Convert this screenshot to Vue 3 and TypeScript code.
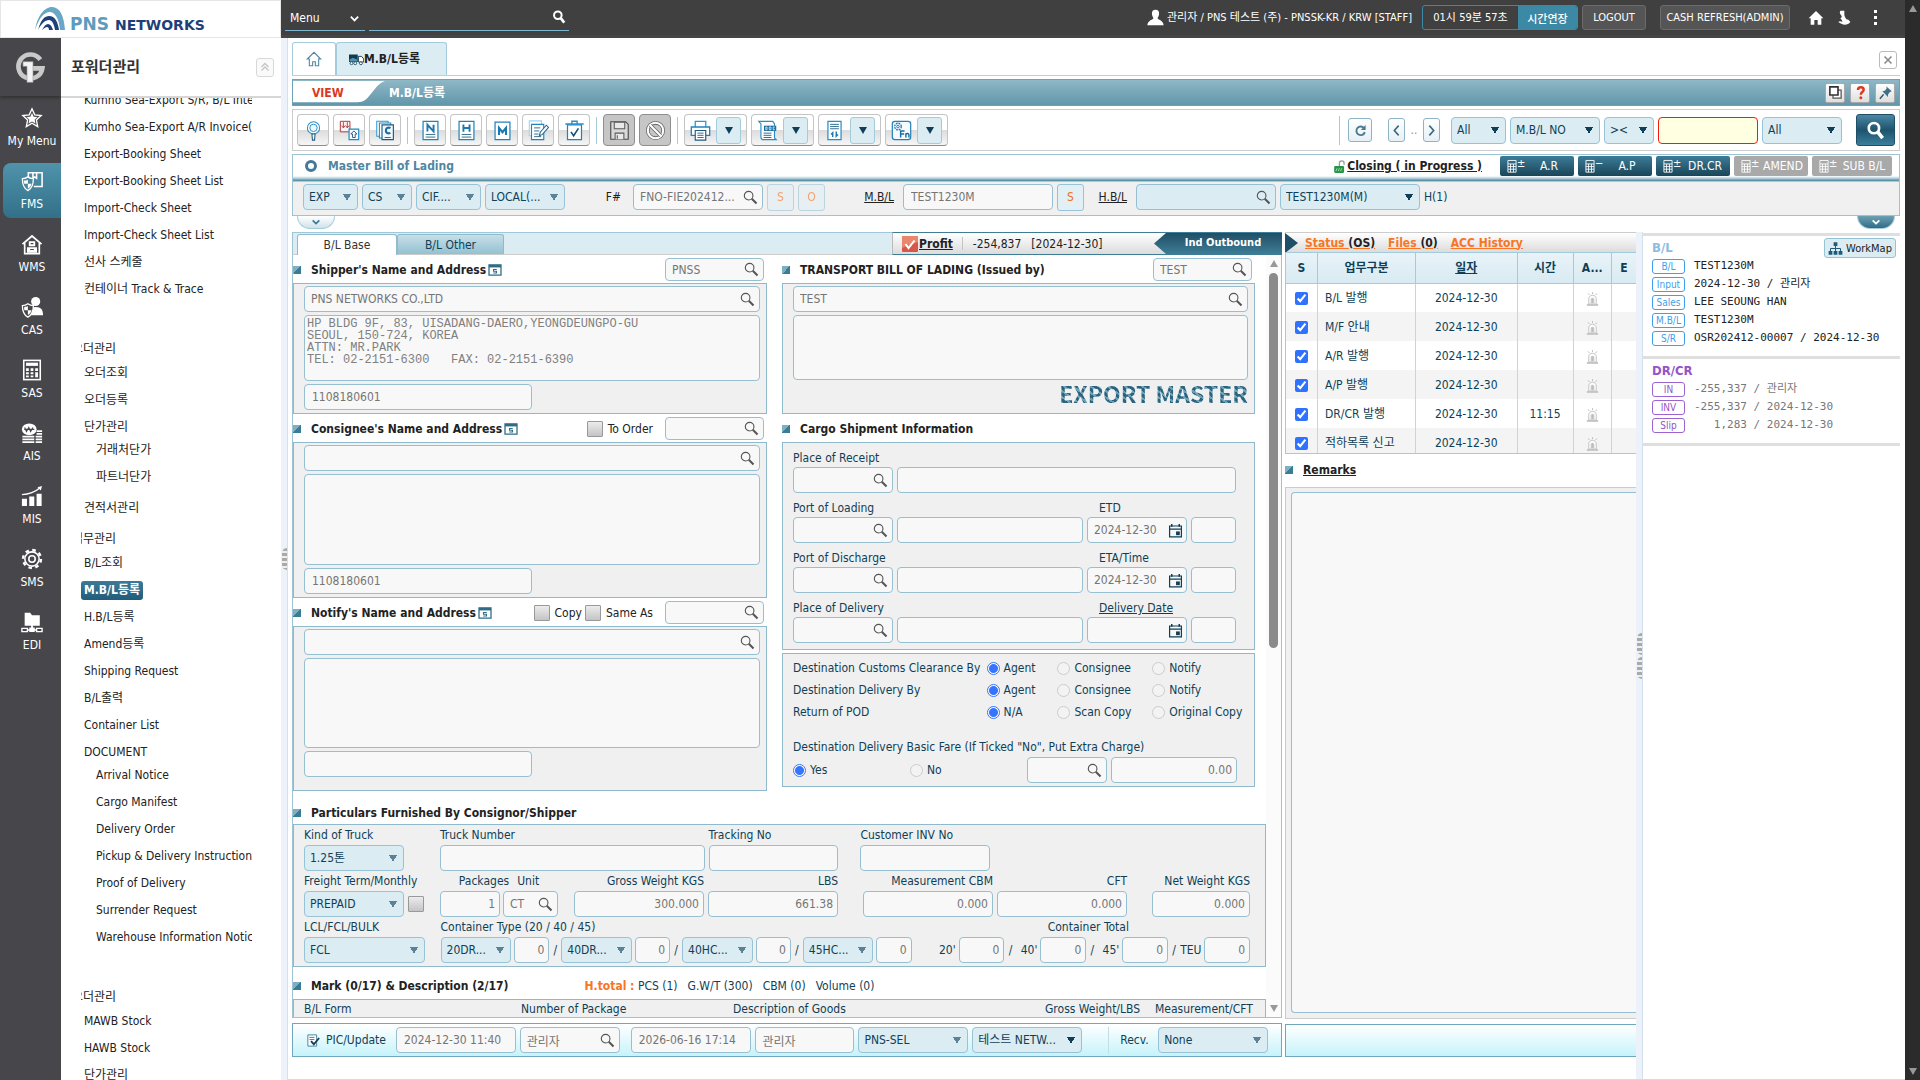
<script setup lang="ts">
import { ref } from 'vue'

const icons: Record<string, string> = {
  lens: '<circle cx="6" cy="6" r="4.6" fill="none" stroke="#555" stroke-width="1.2"/><path d="M9.4 9.4l5 5" stroke="#555" stroke-width="2.2"/>',
  cal: '<path d="M1.7 3.2h12.6v11.6H1.7z M1.7 6.6h12.6" fill="none" stroke="#0f3f56" stroke-width="1.3"/><path d="M4 1v3M12 1v3" stroke="#0f3f56" stroke-width="1.6"/><rect x="8.6" y="9" width="4" height="4" fill="#0f3f56"/>',
  star: '<path d="M12 2l3 6.600 7 .8-5.200 4.800 1.400 7.100-6.200-3.600-6.200 3.600 1.400-7.100L2 9.400l7-.8z" fill="none" stroke="#fff" stroke-width="1.500"/><path d="M12 6.500l1.800 4 4.200.4-3.100 2.900.9 4.200-3.800-2.100L8.200 18l.9-4.200L6 10.900l4.200-.4z" fill="#fff"/>',
  fms: '<path d="M8 8V3h15v15H14M13 3v6l2-1.500L17 9V3" fill="none" stroke="#fff" stroke-width="1.700"/><path d="M7.500 7.500C5.500 9 3.500 9.500 1.500 9.500c0 6.500 1.500 10.500 6 13 4.500-2.500 6-6.500 6-13-2 0-4-.5-6-2z" fill="#47889f" stroke="#fff" stroke-width="1.400"/><path d="M7.500 10.500v4.500h-4c-.3-1-.4-2-.4-3.500 1.500 0 3-.3 4.400-1zM7.500 15h4c-.5 2.500-2 4.300-4 5.500z" fill="#fff"/>',
  wms: '<path d="M1 11.500L12 2l11 9.500-1.300 1.300L12 4.600 2.300 12.800z" fill="#fff"/><path d="M4 11v11.500h16V11" fill="none" stroke="#fff" stroke-width="1.800"/><path d="M8.500 9h7v5.500h-7zM6.500 15.500h11v6h-11z" fill="#fff"/><path d="M10.500 11.500h3M10 18h4" stroke="#47464b" stroke-width="1.300"/>',
  cas: '<circle cx="16" cy="6" r="5" fill="#fff"/><path d="M9 21c0-6 1-9 7-9s8 3 8 9z" fill="#fff"/><path d="M7.500 8.500c-2 1.500-4 2-6 2 0 6.500 1.500 10 6 12.500 4.500-2.500 6-6 6-12.500-2 0-4-.5-6-2z" fill="#47464b" stroke="#fff" stroke-width="1.400"/><path d="M7.500 11v4.500h-4v-3.500c1.500 0 3-.3 4-1zM7.500 15.500h4c-.5 2.500-2 4-4 5.200z" fill="#fff"/>',
  sas: '<rect x="3" y="1.500" width="18" height="21" fill="none" stroke="#fff" stroke-width="1.700"/><rect x="5.500" y="4" width="13" height="3.500" fill="#fff"/><path d="M5.500 10h3v3h-3zM10.500 10h3v3h-3zM15.500 10h3v3h-3zM5.500 14.500h3v2h-3zM10.500 14.500h3v2h-3zM15.500 14.500h3v5.500h-3zM5.500 18h3v2h-3zM10.500 18h3v2h-3z" fill="#fff"/>',
  ais: '<ellipse cx="9" cy="8" rx="8" ry="6.500" fill="#fff"/><path d="M4 6l2 4.500L8.500 6l2 4.500L13 6M3.500 8h11" fill="none" stroke="#47464b" stroke-width="1.200"/><path d="M1.500 16h13M1.500 19h13M1.500 22h13M17 10h6M17 13h6M16 16h7M16 19h7M16 22h7" stroke="#fff" stroke-width="2"/>',
  mis: '<path d="M1 15h5.500v8H1zM9 12.500h5.500V23H9zM17 9.500h5.500V23H17z" fill="#fff"/><path d="M1 10.500C9 10 15 8 20 3.500" fill="none" stroke="#fff" stroke-width="1.400"/><path d="M23 1l-1.500 5-3.500-3.600z" fill="#fff"/>',
  sms: '<circle cx="12" cy="12" r="7.800" fill="none" stroke="#fff" stroke-width="1.700"/><circle cx="12" cy="12" r="9.800" fill="none" stroke="#fff" stroke-width="2.600" stroke-dasharray="3.850 3.850"/><circle cx="12" cy="12" r="3.500" fill="none" stroke="#fff" stroke-width="1.700"/>',
  edi: '<path d="M4 2h6l2 2.500h8.500V16H4z" fill="#fff"/><path d="M1 19h6v3.500H1zM17 19h6v3.500h-6z" fill="none" stroke="#fff" stroke-width="1.500"/><path d="M9 18h6v5H9zM11 15h2v4h-2zM7 20h10v1.500H7z" fill="#fff"/>',
  view: '<circle cx="12" cy="9" r="7" fill="#fff" stroke="#2f8fc4" stroke-width="1.200"/><circle cx="12" cy="9" r="4.200" fill="#eef8fd" stroke="#2f8fc4" stroke-width="1.100"/><path d="M10.200 16h3.600l-.6 7h-2.400z" fill="#fff" stroke="#1c5b80" stroke-width="1.200"/>',
  swap: '<path d="M1.500 1.500h11v12h-11z" fill="#fbf3f3" stroke="#a33" stroke-width="1.100"/><path d="M5 2.500v6M3 6.500l2 2.500L7 6.500M9.500 2.500v6M7.500 6.500l2 2.500 2-2.500" fill="none" stroke="#a33"/><path d="M11.500 10.500h11v12h-11z" fill="#f4faff" stroke="#1c8bc8" stroke-width="1.300"/><path d="M15.500 20v-4h-2l3.500-3.500L20.500 16h-2v4z" fill="#fff" stroke="#1c4e70"/>',
  copy: '<path d="M2 1.500h13v17H2z" fill="#fff" stroke="#2f9ad0" stroke-width="1.200"/><path d="M5 3.500h13v17H5z" fill="#fff" stroke="#2a86b8" stroke-width="1.200"/><path d="M8 5.500h13v17H8z" fill="#f1f9ff" stroke="#1c5b80" stroke-width="1.300"/><path d="M17.500 9.500c-1-1.200-5-1.500-5 2.500s4 3.700 5 2.500" fill="none" stroke="#1a6fa3" stroke-width="2.400"/><path d="M11 20h7" stroke="#1c5b80"/>',
  pageN: '<path d="M3.500 1.500h17v21h-17z" fill="#fff" stroke="#2382bb" stroke-width="1.400"/><path d="M8.500 13V5.500L15.500 13V5.500" fill="none" stroke="#1a77b0" stroke-width="2.200"/><path d="M6.500 16.500h11M6.500 19.500h11" stroke="#1c5b80"/>',
  pageH: '<path d="M3.500 1.500h17v21h-17z" fill="#fff" stroke="#2382bb" stroke-width="1.400"/><path d="M8.500 5v8.500M15.500 5v8.500M8.500 9.200h7" fill="none" stroke="#1a77b0" stroke-width="2.200"/><path d="M6.500 16.500h11M6.500 19.500h11" stroke="#1c5b80"/>',
  pageM: '<path d="M3.500 2.500h17v20h-17z" fill="#fff" stroke="#2382bb" stroke-width="1.400"/><path d="M8 17V9l4 5 4-5v8" fill="none" stroke="#1a77b0" stroke-width="2.400"/>',
  edit: '<path d="M1.500 1h14v17h-14z" fill="#fff" stroke="#9cd3ef" stroke-width="1.200"/><path d="M4 5h14v17.500H4z" fill="#fff" stroke="#2382bb" stroke-width="1.300"/><path d="M7 9h7M7 12.500h6M7 16h5M7 19h8" stroke="#1c5b80"/><path d="M13 18l1-4 7-8 2.500 2.500-7 8z" fill="#fff" stroke="#1c6b9a" stroke-width="1.200"/>',
  trash: '<path d="M4 5.500h16v17H4z" fill="#fff" stroke="#2382bb" stroke-width="1.400"/><path d="M1.500 4.500h21M9 4V1.500h6V4" fill="none" stroke="#2a8fc8" stroke-width="1.600"/><path d="M8 13.500l3 4.500 5.500-8.500" fill="none" stroke="#15507a" stroke-width="1.800"/>',
  save: '<path d="M2 2h17l3 3v17H2z" fill="#d9d9d9" stroke="#4c4c4c" stroke-width="1.300"/><path d="M6 2.500h12V10H6zM7 22v-7h10v7M9.500 17.500v4" fill="#e9e9e9" stroke="#5a5a5a" stroke-width="1.200"/>',
  ban: '<circle cx="12" cy="12" r="8.800" fill="none" stroke="#666" stroke-width="4.200"/><circle cx="12" cy="12" r="8.800" fill="none" stroke="#fff" stroke-width="2.400"/><path d="M6 6l12 12" stroke="#666" stroke-width="4.200"/><path d="M5.500 5.500l13 13" stroke="#fff" stroke-width="2.400"/>',
  print: '<path d="M6 8V1.500h12V8" fill="#fff" stroke="#2a9bd6" stroke-width="1.500"/><path d="M1.500 8h21v9.500h-21z" fill="#fff" stroke="#2382bb" stroke-width="1.500"/><path d="M6 12h12v11H6z" fill="#fff" stroke="#1c5b80" stroke-width="1.300"/><path d="M8.500 15h7M8.500 17.500h7M8.500 20h7" stroke="#1c5b80"/>',
  doc: '<path d="M2 1.500h16l2 3v16l2 2H6l-1.500-2v-16z" fill="#fff" stroke="#2390cb" stroke-width="1.300"/><rect x="8" y="6.500" width="14" height="6" fill="#1c6ea0"/><path d="M10 8v3h1.500V8zM14 8h2v3h-2zM20.500 8h-2v3h2" fill="none" stroke="#fff" stroke-width=".8"/><path d="M7.500 15h9M7.500 17.500h9M7.500 20h9" stroke="#1c5b80"/>',
  sync: '<path d="M4.500 1.500h15v21h-15z" fill="#fff" stroke="#2390cb" stroke-width="1.400"/><path d="M7 5h10M7 7.500h10M7 10h10" stroke="#1c5b80"/><path d="M10 19.500v-5l-2 2M14 13v5.500l2-2" fill="none" stroke="#1c77b0" stroke-width="1.600"/>',
  fn: '<rect x="1.500" y="1.500" width="21" height="21" rx="3" fill="#f4faff" stroke="#2382bb" stroke-width="1.400"/><circle cx="8" cy="7.500" r="3.800" fill="none" stroke="#1c77b0" stroke-width="1.500" stroke-dasharray="2 1"/><circle cx="8" cy="7.500" r="1.500" fill="none" stroke="#1c77b0"/><path d="M11 20v-7.500h4.500M11 16h4M17 20v-5M17 17c0-2 3.500-2 3.500 0v3" fill="none" stroke="#1c6b9a" stroke-width="1.600"/>',
  home: '<path d="M2 12L12 2l10 10h-3v10h-5v-6h-4v6H5V12z" fill="#fff" stroke="#4d87a3" stroke-width="1.600"/>',
  homeW: '<path d="M1 12.500L12 1.500l11 11h-3V22h-5.500v-7h-5v7H4v-9.500z" fill="#fff"/>',
  truck: '<path d="M0 4h14v12H0z" fill="#123a4e"/><path d="M15 7h5l3.500 4v5H15z" fill="#fff" stroke="#123a4e" stroke-width="1.500"/><circle cx="4" cy="18" r="2.300" fill="#fff" stroke="#123a4e" stroke-width="1.300"/><circle cx="10" cy="18" r="2.300" fill="#fff" stroke="#123a4e" stroke-width="1.300"/><circle cx="19" cy="18" r="2.300" fill="#fff" stroke="#123a4e" stroke-width="1.300"/><path d="M1 12l5-3 7 3v3H1z" fill="#4d94b2"/>',
  memo: '<path d="M1 1h14v12H1z" fill="#fff" stroke="#2f6d87" stroke-width="1.500"/><path d="M1 1h14v3H1z" fill="#2f6d87"/><path d="M10 6.500H6.200v2h3.600v2H6" fill="none" stroke="#2f6d87" stroke-width="1.200"/>',
  user: '<path d="M12 1c4 0 5.500 3 5 6.500-.3 2.500-1.500 4-2 5.500 0 2 8 2.500 8.500 10H.5C1 15.500 9 15 9 13c-.5-1.500-1.700-3-2-5.500C6.500 4 8 1 12 1z" fill="#fff"/>',
  quick: '<path d="M5 1h6v6c0 3 2 4 3 7 2 0 4 1 6 4-2 3-5 4-8 4-4 0-7-2-10-4 2-2 4-1 6 0 0-3-2-4-3-6 2 0 2-1 2-3C5 6 3 4 5 1z" fill="#fff"/>',
  calc: '<path d="M1.500 2.500h14v20h-14zM1.500 8.500h14M6 8.500v14M11 8.500v14M1.500 13h14M1.500 17.500h14" fill="none" stroke="#fff" stroke-width="1.500"/>',
  lock: '<path d="M11 11V6c0-5 8-5 8 0v3" fill="none" stroke="#999" stroke-width="2.200"/><rect x="2" y="11" width="17" height="12" rx="2" fill="#259445"/><path d="M5 20l2-5M9 20l2-5M13 20l2-5" stroke="#bfe8c8" stroke-width="1.400"/>',
  bell: '<path d="M6 20v-8c0-8 12-8 12 0v8z" fill="#fff" stroke="#c4c4c4" stroke-width="1.600"/><path d="M9 19v-6c0-4 6-4 6 0v6z" fill="#c9c9c9"/><path d="M3 20h18v3H3z" fill="#c4c4c4"/><path d="M12 1v3M5 3l2 2.500M19 3l-2 2.500M12 12v6" stroke="#bbb" stroke-width="1.500"/>',
  map: '<path d="M9 2h6v6H9zM1 16h6v6H1zM9 16h6v6H9zM17 16h6v6h-6z" fill="#1f5a77"/><path d="M12 8v8M4 16v-4h16v4" fill="none" stroke="#1f5a77" stroke-width="1.600"/>',
  check: '<rect x="0" y="0" width="16" height="16" rx="1" fill="#d9574a"/><path d="M0 0h16v6L0 12z" fill="#e8876e"/><path d="M3.500 8l3 4L12.500 4.500" fill="none" stroke="#fff" stroke-width="2"/>',
  pic: '<path d="M3 3h14v18H3z" fill="#fff" stroke="#4f87a3" stroke-width="1.600"/><path d="M5.500 7h8M5.500 10.500h8" stroke="#2f6d87" stroke-width="1.400"/><path d="M8 13l4.500 5L21 8" fill="none" stroke="#15425a" stroke-width="3"/>',
  up2: '<path d="M5 12l7-7 7 7M5 19l7-7 7 7" fill="none" stroke="#c4c4c4" stroke-width="2.500"/>',
  down: '<path d="M4 8l8 8 8-8" fill="none" stroke="currentColor" stroke-width="4"/>',
  left: '<path d="M16 3l-8 9 8 9" fill="none" stroke="#3a6a83" stroke-width="3"/>',
  right: '<path d="M8 3l8 9-8 9" fill="none" stroke="#3a6a83" stroke-width="3"/>',
  reload: '<path d="M19 8a8 8 0 1 0 1 7" fill="none" stroke="#4d7a92" stroke-width="3.600"/><path d="M21.500 2v9h-9z" fill="#4d7a92"/>',
  searchW: '<circle cx="10" cy="9" r="6.500" fill="none" stroke="#fff" stroke-width="3.400"/><path d="M15 14l6 7.500" stroke="#fff" stroke-width="4.600"/>',
  close: '<path d="M5 5l14 14M19 5L5 19" stroke="#8a8a8a" stroke-width="3.200"/>',
  win: '<path d="M8 8h13v13H8z" fill="#fff" stroke="#555" stroke-width="2"/><path d="M3 3h13v13H3z" fill="#fff" stroke="#333" stroke-width="2.600"/>',
  help: '<path d="M8 8c0-6 9-5.500 9-.5 0 4-4.500 3.500-4.500 8" fill="none" stroke="#d9391f" stroke-width="4"/><circle cx="12.500" cy="20.500" r="2.400" fill="#d9391f"/>',
  pin: '<path d="M13 2l9 8-3 1-3 4v4L7 10l4-1 3-4z" fill="#3e7188"/><path d="M9 15l-6 7" stroke="#24556c" stroke-width="2.400"/>',
  g: '<path d="M38 13A18 18 0 1 0 41 26H27" fill="none" stroke="#c9c9c9" stroke-width="7"/><path d="M12 16h15v31h-9V23h-6z" fill="#f2f2f2" stroke="#9a9a9a"/>',
}

const rail = [
  { icon: 'star', label: 'My Menu' }, { icon: 'fms', label: 'FMS', on: true }, { icon: 'wms', label: 'WMS' },
  { icon: 'cas', label: 'CAS' }, { icon: 'sas', label: 'SAS' }, { icon: 'ais', label: 'AIS' },
  { icon: 'mis', label: 'MIS' }, { icon: 'sms', label: 'SMS' }, { icon: 'edi', label: 'EDI' },
]

interface Group { head?: string; far?: boolean; items: { t: string; on?: boolean; subs?: string[] }[] }
const menu: Group[] = [
  { items: [{ t: 'Kumho Sea-Export S/R, B/L Inte' }, { t: 'Kumho Sea-Export A/R Invoice(' }, { t: 'Export-Booking Sheet' }, { t: 'Export-Booking Sheet List' }, { t: 'Import-Check Sheet' }, { t: 'Import-Check Sheet List' }, { t: '선사 스케줄' }, { t: '컨테이너 Track & Trace' }] },
  { head: '오더관리', far: true, items: [{ t: '오더조회' }, { t: '오더등록' }, { t: '단가관리', subs: ['거래처단가', '파트너단가'] }, { t: '견적서관리' }] },
  { head: '업무관리', items: [{ t: 'B/L조회' }, { t: 'M.B/L등록', on: true }, { t: 'H.B/L등록' }, { t: 'Amend등록' }, { t: 'Shipping Request' }, { t: 'B/L출력' }, { t: 'Container List' }, { t: 'DOCUMENT', subs: ['Arrival Notice', 'Cargo Manifest', 'Delivery Order', 'Pickup & Delivery Instruction', 'Proof of Delivery', 'Surrender Request', 'Warehouse Information Notic'] }] },
  { head: '오더관리', far: true, items: [{ t: 'MAWB Stock' }, { t: 'HAWB Stock' }, { t: '단가관리' }] },
]

const tools = [['view', 'swap', 'copy'], ['pageN', 'pageH', 'pageM', 'edit', 'trash'], ['save', 'ban']]
const dropTools = ['print', 'doc', 'sync', 'fn']
const actions = [
  { t: 'A.R', s: '±' }, { t: 'A.P', s: '−' }, { t: 'DR.CR', s: '±' },
  { t: 'AMEND', s: '±', off: true }, { t: 'SUB B/L', s: '±', off: true, wide: true },
]

const addresses = [
  { id: 'shipper', title: "Shipper's Name and Address", code: 'PNSS', name: 'PNS NETWORKS CO.,LTD', body: 'HP BLDG 9F, 83, UISADANG-DAERO,YEONGDEUNGPO-GU\nSEOUL, 150-724, KOREA\nATTN: MR.PARK\nTEL: 02-2151-6300   FAX: 02-2151-6390', no: '1108180601', checks: [] as string[] },
  { id: 'consignee', title: "Consignee's Name and Address", code: '', name: '', body: '', no: '1108180601', checks: ['To Order'] },
  { id: 'notify', title: "Notify's Name and Address", code: '', name: '', body: '', no: '', checks: ['Copy', 'Same As'] },
]

const ports = [
  { label: 'Port of Loading', dateLabel: 'ETD', date: '2024-12-30' },
  { label: 'Port of Discharge', dateLabel: 'ETA/Time', date: '2024-12-30' },
  { label: 'Place of Delivery', dateLabel: 'Delivery Date', date: '', link: true },
]
const choices = [
  { label: 'Destination Customs Clearance By', opts: ['Agent', 'Consignee', 'Notify'] },
  { label: 'Destination Delivery By', opts: ['Agent', 'Consignee', 'Notify'] },
  { label: 'Return of POD', opts: ['N/A', 'Scan Copy', 'Original Copy'] },
]
const containers = ['20DR...', '40DR...', '40HC...', '45HC...']
const totals = ["20'", "40'", "45'", 'TEU']

const status = [
  { n: 'B/L 발행', d: '2024-12-30', t: '' }, { n: 'M/F 안내', d: '2024-12-30', t: '' },
  { n: 'A/R 발행', d: '2024-12-30', t: '' }, { n: 'A/P 발행', d: '2024-12-30', t: '' },
  { n: 'DR/CR 발행', d: '2024-12-30', t: '11:15' }, { n: '적하목록 신고', d: '2024-12-30', t: '' },
]
const blInfo = [['B/L', 'TEST1230M'], ['Input', '2024-12-30 / 관리자'], ['Sales', 'LEE SEOUNG HAN'], ['M.B/L', 'TEST1230M'], ['S/R', 'OSR202412-00007 / 2024-12-30']]
const drInfo = [['IN', '-255,337 / 관리자'], ['INV', '-255,337 / 2024-12-30'], ['Slip', '   1,283 / 2024-12-30']]

const search = ref('')
const keyword = ref('')
</script>

<template>
  <div class="app">
    <div class="shell">
      <header class="top">
        <a class="brand" href="#" aria-label="PNS Networks">
          <svg viewBox="0 0 30 24" class="arc"><path d="M0 23C3 6 11 0 17 0c8 0 12 9 13 23h-5C24 10 19 5 15 5 9 5 4 11 0 23z" fill="#6aa6c6" /><path d="M3 23C6 12 10 9 14 9c6 0 9 6 10 14h-4c-1-6-3-10-6-10-4 0-8 4-11 10z" fill="#1d4079" /><path d="M7 23c2-4 4-6 6-6s4 2 5 6h-4c0-2-1-3-2-3s-3 1-5 3z" fill="#1d4079" /></svg>
          <span class="pns">PNS</span><span class="net">NETWORKS</span>
        </a>
        <button class="menu-btn">Menu <svg viewBox="0 0 24 24" v-html="icons.down" /></button>
        <label class="finder"><input v-model="search" aria-label="Search menu"><svg viewBox="0 0 24 24" v-html="icons.searchW" /></label>
        <div class="who"><svg viewBox="0 0 24 24" v-html="icons.user" />관리자 / PNS 테스트 (주) - PNSSK-KR / KRW [STAFF]</div>
        <div class="timer"><span>01시 59분 57초</span><button>시간연장</button></div>
        <button class="dark out">LOGOUT</button>
        <button class="dark cash">CASH REFRESH(ADMIN)</button>
        <div class="top-icons">
          <button aria-label="Home"><svg viewBox="0 0 24 24" v-html="icons.homeW" /></button>
          <button aria-label="Quick menu"><svg viewBox="0 0 24 24" v-html="icons.quick" /></button>
          <button aria-label="More" class="dots"><i /><i /><i /></button>
        </div>
      </header>

      <div class="body">
        <nav class="rail">
          <a href="#" class="g" aria-label="G1"><svg viewBox="0 0 48 48" v-html="icons.g" /></a>
          <a v-for="r in rail" :key="r.label" href="#" class="rail-item" :class="{ on: r.on }"><svg viewBox="0 0 24 24" v-html="icons[r.icon]" /><span>{{ r.label }}</span></a>
        </nav>

        <aside class="side">
          <div class="side-head"><h2>포워더관리</h2><button aria-label="Collapse"><svg viewBox="0 0 24 24" v-html="icons.up2" /></button></div>
          <div class="side-list">
            <div v-for="(g, gi) in menu" :key="gi" class="group">
              <h3 v-if="g.head" :class="{ far: g.far }">{{ g.head }}</h3>
              <ul>
                <li v-for="it in g.items" :key="it.t">
                  <a href="#" :class="{ on: it.on }">{{ it.t }}</a>
                  <ul v-if="it.subs" class="subs"><li v-for="s in it.subs" :key="s"><a href="#">{{ s }}</a></li></ul>
                </li>
              </ul>
            </div>
          </div>
        </aside>
        <div class="split"><i class="grip" /></div>

        <main class="main">
          <div class="tabs">
            <a href="#" class="tab-home" aria-label="Home"><svg viewBox="0 0 24 24" v-html="icons.home" /></a>
            <a href="#" class="tab-on"><svg viewBox="0 0 24 24" v-html="icons.truck" />M.B/L등록</a>
            <button class="x" aria-label="Close"><svg viewBox="0 0 24 24" v-html="icons.close" /></button>
          </div>

          <div class="titlebar">
            <svg class="swoosh" viewBox="0 0 92 27" preserveAspectRatio="none"><path d="M0 1h92c-8 3-12 12-18 19-3 3-6 4-10 4H0z" fill="#fff" /></svg>
            <b class="mode">VIEW</b><h1>M.B/L등록</h1>
            <div class="title-icons"><button v-for="n in ['win', 'help', 'pin']" :key="n" :aria-label="n"><svg viewBox="0 0 24 24" v-html="icons[n]" /></button></div>
          </div>

          <div class="toolbar">
            <template v-for="(set, si) in tools" :key="si">
              <div class="set"><button v-for="n in set" :key="n" class="tool" :class="{ off: si === 2 }" :aria-label="n"><svg viewBox="0 0 24 24" v-html="icons[n]" /></button></div>
              <i class="bar" />
            </template>
            <div class="set"><div v-for="n in dropTools" :key="n" class="tool duo"><button :aria-label="n"><svg viewBox="0 0 24 24" v-html="icons[n]" /></button><button class="arrow" :aria-label="n + ' options'"><i /></button></div></div>
            <div class="query">
              <i class="bar" />
              <button class="mini reload" aria-label="Reload"><svg viewBox="0 0 24 24" v-html="icons.reload" /></button>
              <div class="pager"><button class="mini" aria-label="Previous"><svg viewBox="0 0 24 24" v-html="icons.left" /></button><span>..</span><button class="mini" aria-label="Next"><svg viewBox="0 0 24 24" v-html="icons.right" /></button></div>
              <div class="criteria">
                <select class="sel q1" aria-label="Scope"><option>All</option></select>
                <select class="sel q2" aria-label="Field"><option>M.B/L NO</option></select>
                <select class="sel q3" aria-label="Operator"><option>&gt;&lt;</option></select>
                <input v-model="keyword" class="key" aria-label="Keyword">
                <select class="sel q4" aria-label="Team"><option>All</option></select>
              </div>
              <button class="go" aria-label="Search"><svg viewBox="0 0 24 24" v-html="icons.searchW" /></button>
            </div>
          </div>

          <section class="head-box">
            <div class="head-title">
              <i class="ring" /><h2>Master Bill of Lading</h2>
              <a href="#" class="closing"><svg viewBox="0 0 24 24" v-html="icons.lock" /><u>Closing ( in Progress )</u></a>
              <button v-for="a in actions" :key="a.t" class="act" :class="{ off: a.off, wide: a.wide }"><svg viewBox="0 0 17 24" v-html="icons.calc" /><sup>{{ a.s }}</sup><span>{{ a.t }}</span></button>
            </div>
            <div class="keys">
              <select class="sel dim k1" aria-label="Direction"><option>EXP</option></select>
              <select class="sel dim k2" aria-label="Service"><option>CS</option></select>
              <select class="sel dim k3" aria-label="Terms"><option>CIF....</option></select>
              <select class="sel dim k4" aria-label="Route"><option>LOCAL(...</option></select>
              <label class="kl fno" for="fno">F#</label>
              <span class="find k5"><input id="fno" value="FNO-FIE202412..."><svg viewBox="0 0 16 16" v-html="icons.lens" /></span>
              <button class="so faint">S</button><button class="so faint">O</button>
              <label class="kl mbl" for="mbl"><u>M.B/L</u></label>
              <input id="mbl" class="inp k6" value="TEST1230M">
              <button class="so">S</button>
              <label class="kl hbl" for="hbl"><u>H.B/L</u></label>
              <span class="find blue k7"><input id="hbl"><svg viewBox="0 0 16 16" v-html="icons.lens" /></span>
              <select class="sel k7" aria-label="House list"><option>TEST1230M(M)</option></select>
              <span>H(1)</span>
            </div>
          </section>
          <div class="pulls">
            <button class="pull" aria-label="Expand"><svg viewBox="0 0 24 24" v-html="icons.down" /></button>
            <button class="pull solid" aria-label="Expand right"><svg viewBox="0 0 24 24" v-html="icons.down" /></button>
          </div>

          <div class="work">
            <section class="form">
              <div class="form-tabs">
                <button class="ft on">B/L Base</button><button class="ft">B/L Other</button>
                <div class="profit"><svg viewBox="0 0 16 16" v-html="icons.check" /><a href="#">Profit</a><i /><span>-254,837</span><span>[2024-12-30]</span><b>Ind Outbound</b></div>
              </div>
              <div class="pane">
                <div class="sheet">
                  <div class="cols">
                    <div>
                      <template v-for="a in addresses" :key="a.id">
                        <div class="sec">
                          <i class="sq" /><h3>{{ a.title }}</h3><svg class="memo" viewBox="0 0 16 14" v-html="icons.memo" />
                          <div class="sec-right">
                            <label v-for="c in a.checks" :key="c" class="ck"><input type="checkbox">{{ c }}</label>
                            <span class="find short"><input :value="a.code" :aria-label="a.title + ' code'"><svg viewBox="0 0 16 16" v-html="icons.lens" /></span>
                          </div>
                        </div>
                        <div class="card addr" :class="a.id">
                          <span class="find"><input :value="a.name" :aria-label="a.title"><svg viewBox="0 0 16 16" v-html="icons.lens" /></span>
                          <textarea :value="a.body" :aria-label="a.title + ' details'" />
                          <input class="inp half" :value="a.no" :aria-label="a.title + ' number'">
                        </div>
                      </template>
                    </div>
                    <div>
                      <div class="sec"><i class="sq" /><h3>TRANSPORT BILL OF LADING (Issued by)</h3>
                        <div class="sec-right"><span class="find short"><input value="TEST" aria-label="Issuer code"><svg viewBox="0 0 16 16" v-html="icons.lens" /></span></div></div>
                      <div class="card addr">
                        <span class="find"><input value="TEST" aria-label="Issuer"><svg viewBox="0 0 16 16" v-html="icons.lens" /></span>
                        <textarea aria-label="Issuer details" />
                        <div class="stamp"><span>EXPORT MASTER</span></div>
                      </div>
                      <div class="sec"><i class="sq" /><h3>Cargo Shipment Information</h3></div>
                      <div class="card cargo">
                        <div class="cg">
                          <label for="receipt">Place of Receipt</label>
                          <span class="find"><input id="receipt"><svg viewBox="0 0 16 16" v-html="icons.lens" /></span>
                          <input class="inp span3" aria-label="Place of Receipt name">
                        </div>
                        <div v-for="(p, i) in ports" :key="p.label" class="cg">
                          <label :for="'p' + i" class="pl">{{ p.label }}</label><label :for="'d' + i" class="dl"><u v-if="p.link">{{ p.dateLabel }}</u><template v-else>{{ p.dateLabel }}</template></label>
                          <span class="find"><input :id="'p' + i"><svg viewBox="0 0 16 16" v-html="icons.lens" /></span>
                          <input class="inp" :aria-label="p.label + ' name'">
                          <span class="find day"><input :id="'d' + i" :value="p.date"><svg viewBox="0 0 16 16" v-html="icons.cal" /></span>
                          <input class="inp" :aria-label="p.dateLabel + ' time'">
                        </div>
                      </div>
                      <div class="card dest">
                        <div v-for="(c, i) in choices" :key="c.label" class="ch">
                          <span>{{ c.label }}</span>
                          <label v-for="(o, j) in c.opts" :key="o"><input type="radio" :name="'c' + i" :checked="j === 0">{{ o }}</label>
                        </div>
                        <p>Destination Delivery Basic Fare (If Ticked "No", Put Extra Charge)</p>
                        <div class="fare">
                          <label><input type="radio" name="fare" checked>Yes</label><label><input type="radio" name="fare">No</label>
                          <span class="find f1"><input aria-label="Currency"><svg viewBox="0 0 16 16" v-html="icons.lens" /></span>
                          <input class="inp num f2" value="0.00" aria-label="Extra charge">
                        </div>
                      </div>
                    </div>
                  </div>

                  <div class="sec tall"><i class="sq" /><h3>Particulars Furnished By Consignor/Shipper</h3></div>
                  <div class="card parts">
                    <div class="row">
                      <div class="cell w100"><label for="truck">Kind of Truck</label><select id="truck" class="sel dim"><option>1.25톤</option></select></div>
                      <div class="cell w265 g36"><label for="tn">Truck Number</label><input id="tn" class="inp"></div>
                      <div class="cell w130 g4"><label for="tr">Tracking No</label><input id="tr" class="inp"></div>
                      <div class="cell w130 g22"><label for="ci">Customer INV No</label><input id="ci" class="inp"></div>
                      <div class="cell w260" />
                    </div>
                    <div class="row">
                      <div class="cell w120"><label for="ft">Freight Term/Monthly</label><div class="ctl g-4"><select id="ft" class="sel dim grow"><option>PREPAID</option></select><input type="checkbox" aria-label="Monthly"></div></div>
                      <div class="cell w118 g16"><div class="mid"><label for="pk">Packages</label><label for="un">Unit</label></div><div class="ctl g-3"><input id="pk" class="inp num w60" value="1"><span class="find w55"><input id="un" value="CT"><svg viewBox="0 0 16 16" v-html="icons.lens" /></span></div></div>
                      <div class="cell w130 g16 r"><label for="gw">Gross Weight KGS</label><input id="gw" class="inp num" value="300.000"></div>
                      <div class="cell w130 g4 r"><label for="lb">LBS</label><input id="lb" class="inp num" value="661.38"></div>
                      <div class="cell w130 g25 r"><label for="cb">Measurement CBM</label><input id="cb" class="inp num" value="0.000"></div>
                      <div class="cell w130 g4 r"><label for="cf">CFT</label><input id="cf" class="inp num" value="0.000"></div>
                      <div class="cell w98 g25 r"><label for="nw">Net Weight KGS</label><input id="nw" class="inp num" value="0.000"></div>
                    </div>
                    <div class="row">
                      <div class="cell w120"><label for="lf">LCL/FCL/BULK</label><select id="lf" class="sel dim"><option>FCL</option></select></div>
                      <div class="cell w471 g16"><span class="cap">Container Type (20 / 40 / 45)</span>
                        <div class="ctl cont"><template v-for="(c, i) in containers" :key="c"><span v-if="i" class="sl">/</span><select class="sel dim" :aria-label="c"><option>{{ c }}</option></select><input class="inp num" value="0" :aria-label="c + ' count'"></template></div></div>
                      <div class="cell w322 g13"><span class="cap mid">Container Total</span>
                        <div class="ctl tot"><template v-for="(t, i) in totals" :key="t"><span v-if="i" class="sl">/</span><label :for="'t' + i">{{ t }}</label><input :id="'t' + i" class="inp num" value="0"></template></div></div>
                    </div>
                  </div>

                  <div class="sec mark"><i class="sq" /><h3>Mark (0/17) &amp; Description (2/17)</h3><p><b>H.total :</b> <span>PCS (1)</span><span>G.W/T (300)</span><span>CBM (0)</span><span>Volume (0)</span></p></div>
                  <div class="card marks"><span>B/L Form</span><span>Number of Package</span><span>Description of Goods</span><span>Gross Weight/LBS</span><span>Measurement/CFT</span></div>
                </div>
                <div class="scroll" aria-hidden="true"><i class="su" /><i class="thumb" /><i class="sd" /></div>
              </div>
              <div class="foot">
                <svg viewBox="0 0 24 24" v-html="icons.pic" /><span class="pl">PIC/Update</span>
                <input class="inp b120" value="2024-12-30 11:40" aria-label="Created">
                <span class="find b100"><input value="관리자" aria-label="Person in charge"><svg viewBox="0 0 16 16" v-html="icons.lens" /></span>
                <input class="inp b120 ml" value="2026-06-16 17:14" aria-label="Updated">
                <input class="inp b100" value="관리자" aria-label="Updated by">
                <select class="sel dim b110" aria-label="Branch"><option>PNS-SEL</option></select>
                <select class="sel b110" aria-label="Company"><option>테스트 NETW...</option></select>
                <i class="bar" /><label for="recv">Recv.</label>
                <select id="recv" class="sel dim b110"><option>None</option></select>
              </div>
            </section>

            <section class="status">
              <div class="st-head"><i /><a href="#">Status <b>(OS)</b></a><a href="#">Files <b>(0)</b></a><a href="#">ACC History</a></div>
              <div class="grid">
                <table>
                  <colgroup><col class="c1"><col class="c2"><col class="c3"><col class="c4"><col class="c5"><col class="c6"></colgroup>
                  <thead><tr><th>S</th><th>업무구분</th><th><u>일자</u></th><th>시간</th><th>A...</th><th>E</th></tr></thead>
                  <tbody><tr v-for="s in status" :key="s.n"><td><input type="checkbox" checked :aria-label="s.n"></td><td class="n">{{ s.n }}</td><td>{{ s.d }}</td><td>{{ s.t }}</td><td><svg viewBox="0 0 24 24" v-html="icons.bell" /></td><td /></tr></tbody>
                </table>
              </div>
              <div class="sec rem"><i class="sq" /><h3><label for="remarks"><u>Remarks</u></label></h3></div>
              <div class="rem-box"><textarea id="remarks" /></div>
              <div class="st-foot" />
            </section>

            <div class="split two"><i class="grip" /><i class="grip" /></div>

            <aside class="info">
              <div class="blk">
                <div class="blk-head"><h4>B/L</h4><button class="wm"><svg viewBox="0 0 24 24" v-html="icons.map" />WorkMap</button></div>
                <p v-for="r in blInfo" :key="r[0]"><em>{{ r[0] }}</em><span>{{ r[1] }}</span></p>
              </div>
              <div class="blk dr">
                <div class="blk-head"><h4>DR/CR</h4></div>
                <p v-for="r in drInfo" :key="r[0]"><em>{{ r[0] }}</em><span>{{ r[1] }}</span></p>
              </div>
              <div class="end" />
            </aside>
          </div>
        </main>
      </div>
    </div>
    <div class="page-scroll" aria-hidden="true"><i class="su" /><i class="sd" /></div>
  </div>
</template>

<style>
body { margin: 0; background: #fff; }
</style>

<style scoped>
* { box-sizing: border-box; }
.app, .app button, .app input, .app select { font-family: "DejaVu Sans Condensed", "Noto Sans CJK KR", sans-serif; font-size: 12px; }
.app { display: flex; height: 100vh; color: #0f3f56; line-height: 16px; overflow: hidden; white-space: nowrap; }
h1, h2, h3, h4, p, ul { margin: 0; padding: 0; }
ul { list-style: none; }
a { color: inherit; text-decoration: none; }
button { padding: 0; border: 0; background: none; color: inherit; cursor: pointer; }
svg { display: block; flex: none; }
i { display: block; font-style: normal; }
.shell { flex: 1; min-width: 0; display: flex; flex-direction: column; }
.page-scroll { width: 15px; background: #2b2b2b; display: flex; flex-direction: column; justify-content: space-between; align-items: center; padding: 5px 0; }
.su, .sd { border: 4px solid transparent; }
.su { border-top: 0; border-bottom: 7px solid #999; }
.sd { border-bottom: 0; border-top: 7px solid #999; }

/* header */
.top { height: 38px; flex: none; display: flex; align-items: center; background: #3f403f; border-bottom: 3px solid #454548; color: #fff; font-size: 11px; }
.brand { width: 281px; height: 38px; margin-bottom: -3px; flex: none; background: #fff; border: 1px solid #e6e6e6; display: flex; align-items: flex-end; padding: 0 0 6px 34px; font-family: "DejaVu Sans", sans-serif; }
.arc { width: 30px; height: 24px; margin-right: 5px; }
.pns, .net { font-weight: 700; }
.pns { font-size: 17px; line-height: 14px; color: #5d9cbd; margin-right: 6px; }
.net { font-size: 14px; line-height: 12px; color: #1d4079; }
.menu-btn { width: 80px; height: 27px; margin: 0 4px; padding: 2px 5px 0; border-bottom: 1px solid #7fb6cf; display: flex; justify-content: space-between; align-items: center; color: #fff; }
.menu-btn svg { width: 11px; height: 11px; }
.finder { width: 200px; height: 27px; border-bottom: 1px solid #7fb6cf; display: flex; align-items: center; padding-right: 3px; }
.finder input { flex: 1; min-width: 0; border: 0; background: none; color: #fff; outline: 0; }
.finder svg { width: 14px; height: 14px; }
.who { margin-left: auto; display: flex; align-items: center; gap: 3px; }
.who svg { width: 17px; height: 17px; }
.timer { margin-left: 10px; width: 156px; height: 25px; border: 1px solid #3b89a5; border-radius: 3px; display: flex; align-items: center; overflow: hidden; }
.timer span { width: 95px; text-align: center; }
.app .timer button, .app .dark { font-size: 11px; }
.timer button { flex: 1; align-self: stretch; background: #3b89a5; font-weight: 500; }
.dark { height: 25px; border: 1px solid #6b6b6b; border-radius: 3px; background: #555; }
.out { width: 64px; margin-left: 4px; }
.cash { width: 130px; margin-left: 14px; }
.top-icons { display: flex; align-items: center; gap: 13px; margin: 0 28px 0 18px; }
.top-icons svg { width: 16px; height: 16px; }
.top-icons .dots { display: grid; gap: 3px; margin-left: 8px; width: 3px; }
.dots i { width: 3px; height: 3px; background: #fff; }

.body { flex: 1; min-height: 0; display: flex; }
.rail { width: 61px; flex: none; background: #47464b; color: #fff; overflow: hidden; }
.g { display: flex; height: 58px; align-items: center; justify-content: center; box-shadow: 0 2px 3px #333; margin-bottom: 4px; }
.g svg { width: 32px; height: 32px; }
.rail-item { height: 55px; margin: 0 0 8px 3px; padding-top: 7px; border-radius: 8px 0 0 8px; display: flex; flex-direction: column; align-items: center; gap: 4px; }
.rail-item.on { background: linear-gradient(#4f93ab, #33708a); }
.rail-item svg { width: 22px; height: 22px; }

.side { width: 220px; flex: none; color: #222; display: flex; flex-direction: column; }
.side-head { height: 60px; flex: none; border-bottom: 2px solid #d6d6d6; display: flex; align-items: center; justify-content: space-between; padding: 0 7px 0 10px; }
.side-head h2 { font-size: 15px; font-weight: 700; color: #333; }
.side-head button { width: 18px; height: 19px; border: 1px solid #d8d8d8; border-radius: 3px; display: flex; align-items: center; justify-content: center; background: #fafafa; }
.side-head svg { width: 12px; height: 12px; }
.side-list { flex: 1; overflow: hidden; margin: 0 29px 0 20px; }
.group:first-child { margin-top: -11px; }
.side-list h3 { font-size: 12px; font-weight: 400; line-height: 21px; margin: 7px 0 0 -9px; }
.side-list h3.far { margin-top: 36px; }
.side-list li { line-height: 27px; }
.side-list li > a { display: inline-block; height: 19px; line-height: 19px; margin: 4px 0; padding: 0 3px; border-radius: 3px; vertical-align: top; }
.side-list a.on { background: linear-gradient(#3c7b98, #215c7a); color: #fff; font-weight: 700; }
.side-list .subs { margin: -4px 0 4px 12px; }

.split { width: 7px; flex: none; background: #edf2fa; border-right: 1px solid #d3e0ee; display: flex; flex-direction: column; align-items: flex-end; justify-content: center; gap: 2px; }
.grip { width: 5px; height: 22px; border-radius: 5px 0 0 5px; background: repeating-linear-gradient(#aaa 0 3px, #eee 3px 5px); }
.main { flex: 1; min-width: 0; display: flex; flex-direction: column; gap: 3px; padding: 4px 5px 0 4px; border-bottom: 1px solid #cadfe9; }

.tabs { height: 34px; flex: none; display: flex; border-bottom: 1px solid #ccc; align-items: stretch; }
.tab-home, .tab-on { border: 1px solid #a4cbdc; border-bottom: 0; border-radius: 3px 3px 0 0; display: flex; align-items: center; }
.tab-home { width: 44px; justify-content: center; }
.tab-home svg { width: 16px; height: 16px; }
.tab-on { width: 111px; padding-left: 12px; background: #dbecf3; color: #222; font-weight: 700; }
.tab-on svg { width: 15px; height: 15px; }
.x { margin: 9px 3px 0 auto; width: 18px; height: 18px; border: 1px solid #bbb; border-radius: 3px; display: flex; align-items: center; justify-content: center; }
.x svg { width: 12px; height: 12px; }

.titlebar { position: relative; height: 27px; flex: none; display: flex; align-items: center; background: linear-gradient(#8fb8c7, #6196aa); border: 1px solid #6fa2b5; }
.swoosh { position: absolute; left: 0; top: 0; width: 92px; height: 25px; }
.mode { position: relative; width: 96px; padding-left: 19px; color: #d9391f; }
.titlebar h1 { font-size: 12px; font-weight: 700; color: #fff; }
.title-icons { margin-left: auto; display: flex; gap: 5px; padding-right: 4px; }
.title-icons button { width: 20px; height: 20px; background: linear-gradient(#fff, #dedede); border: 1px solid #a9a9a9; border-radius: 2px; display: flex; align-items: center; justify-content: center; }
.title-icons svg { width: 15px; height: 15px; }

.toolbar { height: 42px; flex: none; border: 1px solid #ccc; display: flex; align-items: center; padding: 0 4px; }
.set { display: flex; gap: 4px; }
.bar { width: 1px; height: 27px; background: #a4cbdc; margin: 0 6px; }
.tool { width: 32px; height: 32px; border: 1px solid #c4c4c4; border-bottom-color: #8c8c8c; border-radius: 4px; background: linear-gradient(#fff 50%, #dcdcdc 51%, #f6f6f6); display: flex; align-items: center; justify-content: center; }
.tool svg { width: 21px; height: 21px; }
.tool.off { background: #c6c6c6; border-color: #8f8f8f; }
.duo { width: 63px; justify-content: space-between; padding: 0 5px; }
.arrow { width: 25px; height: 27px; border: 1px solid #a4cbdc; border-radius: 3px; background: #dbecf3; display: flex; align-items: center; justify-content: center; }
.arrow i { border: 4px solid transparent; border-top: 7px solid #0f3f56; border-bottom: 0; }
.query { margin-left: auto; display: flex; align-items: center; }
.query .bar { margin: 0 8px 0 0; height: 29px; }
.mini { width: 17px; height: 24px; border: 1px solid #8db3c5; border-radius: 3px; background: linear-gradient(#fff, #e6f0f5); display: flex; align-items: center; justify-content: center; }
.mini svg { width: 13px; height: 13px; }
.reload { width: 24px; }
.pager { display: flex; align-items: center; margin: 0 11px 0 16px; color: #c08080; }
.pager span { width: 18px; text-align: center; }
.criteria { display: flex; gap: 4px; }
.go { width: 39px; height: 32px; margin-left: 14px; border-radius: 3px; background: linear-gradient(#4b87a3, #1e536c 50%, #3a7e9d); border: 1px solid #1f4f66; display: flex; align-items: center; justify-content: center; }
.go svg { width: 19px; height: 19px; }

/* controls */
.sel { height: 26px; min-width: 0; padding: 0 15px 0 5px; border: 1px solid #97c3d7; border-radius: 4px; color: #0f3f56; appearance: none; --c: #0f3f56; background-color: #dbecf3; background-image: linear-gradient(to top right, transparent 50%, var(--c) 50%), linear-gradient(to top left, transparent 50%, var(--c) 50%); background-size: 4px 7px; background-repeat: no-repeat; background-position: right 10px center, right 6px center; outline: 0; }
.sel.dim { --c: #5c8298; }
.inp, .find { height: 26px; min-width: 0; border: 1px solid #97bfd2; border-radius: 4px; background: #f8f8f8; color: #757575; padding: 0 7px; outline: 0; }
.find { display: flex; align-items: center; padding: 0 4px 0 0; }
.find input { flex: 1; width: 0; min-width: 0; height: 100%; padding: 0 0 0 6px; border: 0; background: none; color: #757575; outline: 0; }
.find svg { width: 15px; height: 15px; }
.find.day { padding-right: 3px; }
.find.blue { background: #dbecf3; }
.num { text-align: right; padding: 0 4px; }
textarea { display: block; resize: none; border: 1px solid #97bfd2; border-radius: 4px; background: #f8f8f8; color: #808080; padding: 2px; outline: 0; font: 12px/12px "Liberation Mono", monospace; }
input[type=checkbox] { margin: 0; }
.ck input, .parts input[type=checkbox] { appearance: none; width: 16px; height: 16px; border: 1px solid #999; background: linear-gradient(#ececec, #c4c4c8); border-radius: 1px; }
.criteria .sel { height: 27px; }
.q1 { width: 55px; }
.q2 { width: 90px; }
.q3 { width: 50px; }
.q4 { width: 80px; }
.key { width: 100px; height: 27px; border: 1px solid #f01c0c; border-radius: 4px; background: #ffffe1; }

.head-box { flex: none; border: 1px solid #9cc4d4; }
.head-title { height: 27px; display: flex; align-items: center; gap: 4px; padding: 0 7px 5px 12px; background: linear-gradient(transparent 21px, #9cc1ce 24px, #5b95a9 25px, #5b95a9 26px, #a9c9d4 26px); }
.ring { width: 12px; height: 12px; border: 3px solid #45799a; border-radius: 50%; }
.head-title h2 { margin-left: 7px; font-size: 12px; color: #4f87a3; }
.closing { margin-left: auto; margin-right: 14px; display: flex; align-items: center; font-weight: 700; color: #222; }
.closing svg { width: 14px; height: 15px; }
.act { width: 74px; height: 20px; border-radius: 2px; background: linear-gradient(#3c7c98, #1a4558); color: #fff; display: flex; align-items: center; padding-left: 7px; }
.act.off { background: #a9a9a9; }
.act.wide { width: 80px; }
.act svg { width: 10px; height: 14px; }
.act sup { width: 7px; font-size: 11px; line-height: 16px; align-self: flex-start; }
.act span { flex: 1; text-align: center; }
.keys { height: 33px; display: flex; align-items: center; gap: 4px; padding: 0 10px 3px; background: #f0f0f0; }
.k1 { width: 55px; }
.k2 { width: 50px; }
.k3 { width: 65px; }
.k4 { width: 80px; }
.k5 { width: 130px; }
.k6 { width: 150px; }
.k7 { width: 140px; }
.kl { text-align: right; color: #222; padding-right: 5px; }
.kl.fno { width: 60px; padding-right: 8px; }
.kl.mbl { width: 70px; }
.kl.hbl { width: 44px; }
.so { width: 27px; height: 27px; border: 1px solid #97c3d7; border-radius: 3px; background: #e2eff5; color: #f2701d; }
.so.faint { opacity: 0.6; }
.pulls { height: 13px; flex: none; margin-top: -3px; display: flex; justify-content: space-between; padding: 0 5px; }
.pull { width: 38px; height: 13px; border: 1px solid #a4cbdc; border-top: 0; border-radius: 0 0 16px 16px; background: linear-gradient(#fff, #cfe3ea); color: #3b7a94; display: flex; align-items: center; justify-content: center; }
.pull.solid { background: linear-gradient(#6da0b3, #2f6d87); color: #fff; }
.pull svg { width: 10px; height: 10px; }

/* work area */
.work { flex: 1; min-height: 0; display: flex; }
.form { flex: 990 1 0; min-width: 0; display: flex; flex-direction: column; margin-right: 3px; padding-bottom: 22px; }
.form-tabs { height: 23px; flex: none; display: flex; align-items: flex-end; padding-left: 4px; background: #dbecf3; border-top: 1px solid #a0c8da; border-bottom: 1px solid #ccc; border-left: 1px solid #9cc4d4; }
.ft { width: 107px; height: 20px; background: linear-gradient(#c6dfe8, #94c1d1); border: 1px solid #8fbccd; border-bottom: 0; border-radius: 3px 3px 0 0; }
.ft.on { width: 100px; background: #fff; height: 21px; margin-bottom: -1px; color: #333; }
.profit { align-self: stretch; margin-left: auto; width: 390px; display: flex; align-items: center; background: linear-gradient(#fff, #dcdcdc); border-top: 1px solid #3f7c96; border-bottom: 1px solid #3f7c96; border-left: 1px solid #bbb; margin-top: -1px; margin-bottom: -1px; padding-left: 9px; color: #222; }
.profit svg { width: 16px; height: 16px; margin-right: 1px; }
.profit a { font-weight: 700; text-decoration: underline; }
.profit i { width: 1px; height: 13px; background: #c4c4c4; margin: 0 10px 0 9px; }
.profit span { margin-right: 10px; }
.profit b { margin-left: auto; align-self: stretch; width: 128px; padding-left: 10px; text-align: center; line-height: 20px; color: #fff; font-size: 11px; background: linear-gradient(#1f4f66, #3f7c96); clip-path: polygon(0 50%, 12px 0, 100% 0, 100% 100%, 12px 100%); }
.pane { flex: 1; min-height: 0; display: flex; border: 1px solid #9cc4d4; border-top: 0; overflow: hidden; }
.sheet { flex: 1; min-width: 0; overflow: hidden; }
.cols { display: grid; grid-template-columns: 474fr 473fr; gap: 15px; padding-right: 11px; }
.cols > div { min-width: 0; }
.scroll { width: 15px; display: flex; flex-direction: column; align-items: center; background: #fbfbfb; padding: 5px 0; }
.scroll .thumb { width: 9px; flex: 376 1 0; border-radius: 5px; background: #8b8b8b; margin-top: 6px; }
.scroll::after { content: ""; order: 1; flex: 357 1 0; }
.scroll .sd { order: 2; }

.sec { height: 28px; display: flex; align-items: center; padding-top: 1px; }
.sq { width: 8px; height: 8px; flex: none; background: linear-gradient(135deg, #7fb0c2 50%, #3a7c96 50%); }
.sec h3 { margin-left: 10px; font-size: 12px; color: #222; }
.memo { width: 14px; height: 12px; margin-left: 2px; }
.sec-right { margin-left: auto; display: flex; align-items: center; padding-right: 3px; color: #222; }
.find.short { width: 99px; height: 23px; margin-left: 10px; }
.ck { display: flex; align-items: center; gap: 5px; margin-left: 3px; }
.ck:nth-last-child(2) { padding-right: 2px; }
.card { border: 1px solid #8fbacb; background: #f0f0f0; }
.addr { display: flex; flex-direction: column; gap: 3px; padding: 2px 6px 3px 10px; height: 131px; }
.addr textarea { flex: 1; }
.addr.consignee { height: 156px; }
.addr.notify { height: 165px; padding-bottom: 13px; }
.half { width: 50%; }
.stamp { height: 30px; margin-top: -3px; display: flex; justify-content: flex-end; }
.stamp span { height: 26px; font: 700 23px/26px "Noto Sans CJK KR", sans-serif; color: transparent; background: repeating-linear-gradient(35deg, #2c6480 0 3px, #6ba0b5 3px 5px); background-clip: text; }
.cargo { padding: 4px 18px 6px 10px; display: grid; gap: 4px; height: 208px; }
.cg { display: grid; grid-template-columns: 100fr 186fr 100fr 45fr; grid-template-rows: 20px 26px; column-gap: 4px; }
.cg label { grid-column: 1 / -1; line-height: 22px; }
.cg label.pl { grid-column: 1 / 3; }
.cg label.dl { grid-column: 3 / -1; padding-left: 12px; }
.span3 { grid-column: 2 / -1; }
.dest { margin-top: 3px; padding: 3px 8px 3px 10px; height: 134px; }
.ch { display: grid; grid-template-columns: 194fr 71fr 95fr 94fr; height: 22px; align-items: center; }
.ch label, .fare label { display: flex; align-items: center; gap: 4px; }
input[type=radio] { appearance: none; flex: none; width: 13px; height: 13px; margin: 0; border: 1px solid #ccc; border-radius: 50%; background: #f3f3f3; }
input[type=radio]:checked { border: 1px solid #3574ff; background: radial-gradient(#3574ff 4px, #fff 5px); }
.dest p { margin-top: 14px; line-height: 20px; }
.fare { display: flex; align-items: center; padding-right: 9px; }
.fare label { width: 117px; }
.f1 { flex: 80 1 80px; margin-right: 4px; }
.f2 { flex: 125 1 125px; }

.sec.tall { height: 33px; padding-top: 10px; }
.parts { padding: 0 15px 3px 10px; }
.row { display: flex; }
.cell { min-width: 0; display: flex; flex-direction: column; }
.cell label, .cap, .mid { line-height: 20px; }
.r label { text-align: right; }
.mid { display: flex; justify-content: center; gap: 8px; }
.cap.mid { display: block; text-align: center; }
.ctl { display: flex; align-items: center; }
.g-4 { gap: 4px; }
.g-3 { gap: 3px; }
.grow { flex: 1; }
.w60 { flex: 60 1 60px; }
.w55 { flex: 55 1 55px; }
.w98 { flex: 98 1 0; }
.w100 { flex: 100 1 0; }
.w118 { flex: 118 1 0; }
.w120 { flex: 120 1 0; }
.w130 { flex: 130 1 0; }
.w260 { flex: 260 1 0; }
.w265 { flex: 265 1 0; }
.w322 { flex: 322 1 0; }
.w471 { flex: 471 1 0; }
.g4 { margin-left: 4px; }
.g13 { margin-left: 13px; }
.g16 { margin-left: 16px; }
.g22 { margin-left: 22px; }
.g25 { margin-left: 25px; }
.g36 { margin-left: 36px; }
.sl { width: 12px; text-align: center; flex: none; }
.cont { padding-right: 2px; }
.cont .sel { flex: 70 1 70px; margin-right: 3px; }
.cont .inp { flex: 35 1 35px; }
.tot { padding-left: 8px; }
.tot label { width: 24px; text-align: right; padding-right: 3px; flex: none; }
.tot .inp { flex: 1 1 45px; }
.mark { height: 32px; padding-top: 6px; }
.mark p { margin-left: 76px; }
.mark b { color: #f97423; }
.mark p span { margin-right: 10px; }
.marks { height: 40px; padding: 0 12px 0 10px; display: grid; grid-template-columns: 217fr 212fr 312fr 110fr 98fr; line-height: 18px; }

.foot { height: 34px; flex: none; margin-top: 5px; border: 1px solid #6fa8bc; background: linear-gradient(#fff, #c6f3fb); display: flex; align-items: center; gap: 4px; padding: 0 13px; }
.foot svg { width: 15px; height: 15px; }
.foot .pl { width: 66px; margin-left: 1px; }
.foot .ml { margin-left: 7px; }
.b100 { flex: 100 1 100px; }
.b110 { flex: 110 1 110px; }
.b120 { flex: 120 1 120px; }
.foot .bar { margin: 0 7px 0 22px; background: #c4dce6; }
.foot label { width: 34px; }

.status { flex: 351 1 0; min-width: 0; display: flex; flex-direction: column; overflow: hidden; padding-bottom: 22px; }
.st-head { height: 20px; flex: none; display: flex; align-items: center; gap: 13px; border-top: 1px solid #ccc; background: linear-gradient(#fff, #dcdcdc); font-weight: 700; }
.st-head i { margin-right: -6px; border: 10px solid transparent; border-left: 13px solid #1f4f66; border-right: 0; }
.st-head a { color: #f97423; text-decoration: underline; }
.st-head b { color: #222; }
.grid { height: 202px; flex: none; overflow: hidden; border-left: 1px solid #a4cbdc; border-bottom: 1px solid #a4cbdc; border-top: 1px solid #a4cbdc; }
table { width: 100%; table-layout: fixed; border-collapse: collapse; }
.c1 { width: 9%; }
.c2 { width: 28%; }
.c3 { width: 29%; }
.c4 { width: 16%; }
.c5 { width: 11%; }
.c6 { width: 7%; }
th { height: 30px; padding: 0; background: linear-gradient(#e8f3f8, #d9eaf2); border-right: 1px solid #a4cbdc; border-bottom: 1px solid #a4cbdc; font-weight: 700; }
td { height: 29px; padding: 0; text-align: center; border-right: 1px solid #bcd9e6; }
th:last-child, td:last-child { border-right: 0; }
td.n { text-align: left; padding-left: 7px; }
tbody tr:nth-child(even) { background: #f4f4f4; }
td svg { width: 15px; height: 16px; margin: 2px auto 0; }
td input[type=checkbox] { display: block; margin: 2px auto 0; width: 13px; height: 13px; accent-color: #2f72ff; }
.sec.rem { height: 33px; flex: none; padding-bottom: 3px; }
.rem-box { flex: 1; min-height: 0; display: flex; border: 1px solid #ccc; border-right: 0; background: #f0f0f0; padding: 4px 0 5px 5px; }
.rem-box textarea { flex: 1; border-right: 0; border-radius: 4px 0 0 4px; }
.st-foot { height: 33px; flex: none; margin-top: 5px; border: 1px solid #6fa8bc; border-right: 0; background: linear-gradient(#fff, #c6f3fb); }

.info { flex: 257 1 0; min-width: 0; color: #222; padding-top: 1px; }
.blk { border-top: 3px solid #dfdfdf; padding: 2px 4px 8px 9px; height: 123px; }
.blk-head { display: flex; justify-content: space-between; align-items: flex-start; height: 19px; }
.blk h4 { font-size: 13px; line-height: 20px; color: #8dbce2; }
.wm { width: 72px; height: 20px; border: 1px solid #97c3d7; border-radius: 3px; background: #dbecf3; display: flex; align-items: center; justify-content: center; gap: 3px; }
.app .wm { font-size: 11px; }
.wm svg { width: 15px; height: 15px; }
.blk p { display: flex; align-items: center; height: 18px; white-space: pre; }
.blk em { width: 33px; height: 15px; margin-right: 9px; border: 1px solid #3f9fe8; border-radius: 3px; font-style: normal; font-size: 10px; line-height: 13px; text-align: center; color: #3f9fe8; }
.blk p span { font-family: "DejaVu Sans Mono", "Noto Sans CJK KR", monospace; font-size: 11px; }
.dr { height: 87px; color: #777; }
.dr h4 { color: #9355c8; }
.dr em { color: #9355c8; border-color: #9b62d0; }
.end { height: 3px; background: #dfdfdf; }
</style>
